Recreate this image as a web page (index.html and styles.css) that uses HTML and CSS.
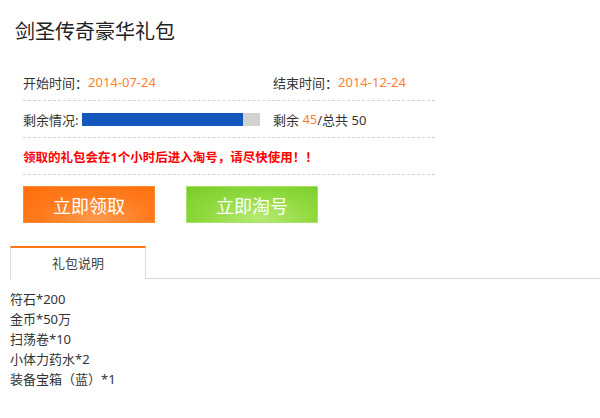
FILE: index.html
```html
<!DOCTYPE html>
<html>
<head>
    <meta charset="utf-8">
    <link rel="stylesheet" href="styles.css">
</head>
<body>
    <h1 class="title">剑圣传奇豪华礼包</h1>

    <div class="info">
        <div class="info-row">
            <div class="col">开始时间：<span class="hl">2014-07-24</span></div>
            <div class="col">结束时间：<span class="hl">2014-12-24</span></div>
        </div>
        <div class="info-row">
            <div class="col">剩余情况:<span class="bar"><span class="bar-fill" style="width: 90%;"></span></span></div>
            <div class="col">剩余&nbsp;<span class="hl">45</span>/总共&nbsp;50</div>
        </div>
        <div class="info-row notice">领取的礼包会在1个小时后进入淘号，请尽快使用！！</div>
    </div>

    <div class="actions">
        <button class="btn btn-get">立即领取</button>
        <button class="btn btn-tao">立即淘号</button>
    </div>

    <div class="tabs">
        <div class="tab active">礼包说明</div>
        <div class="tab-rest"></div>
    </div>

    <ul class="gift-list">
        <li>符石*200</li>
        <li>金币*50万</li>
        <li>扫荡卷*10</li>
        <li>小体力药水*2</li>
        <li>装备宝箱（蓝）*1</li>
    </ul>
</body>
</html>
```

FILE: styles.css
```css
body {
    margin: 0;
    background: #fff;
    color: #333;
    font-family: "Noto Sans", "Noto Sans CJK SC", sans-serif;
    font-size: 13px;
}

.title {
    margin: 0 0 18px 15px;
    padding-top: 18px;
    font-size: 20px;
    line-height: 28px;
    font-weight: normal;
    color: #222;
}

.info {
    width: 412px;
    margin-left: 23px;
}

.info-row {
    display: flex;
    align-items: center;
    height: 36px;
    border-bottom: 1px dashed #d4d4d4;
}

.col {
    display: flex;
    align-items: center;
}

.col:first-child {
    width: 250px;
}

.hl {
    color: #ff7f2a;
}

.bar {
    display: inline-block;
    width: 178px;
    height: 13px;
    margin-left: 4px;
    background: #d2d2d2;
}

.bar-fill {
    display: block;
    height: 100%;
    background: #1558bb;
}

.notice {
    color: #f00;
    font-size: 12.5px;
    font-weight: bold;
}

.actions {
    display: flex;
    gap: 31px;
    margin: 11px 0 0 23px;
}

.btn {
    width: 132px;
    height: 37px;
    border: none;
    padding: 0;
    color: #fff;
    font-family: inherit;
    font-size: 18px;
    cursor: pointer;
}

.btn-get {
    background: radial-gradient(ellipse at 55% 90%, #ff9a4e 0%, #ff7a1c 55%, #ff6d0a 100%);
    border: 1px solid #ff8a2e;
}

.btn-tao {
    background: radial-gradient(ellipse at 55% 90%, #b6ea74 0%, #8fd93c 55%, #78cc2a 100%);
    border: 1px solid #a6e36a;
}

.tabs {
    display: flex;
    margin: 23px 0 0 10px;
}

.tab {
    width: 134px;
    height: 31px;
    line-height: 31px;
    text-align: center;
    border-top: 2px solid #ff7a14;
    border-left: 1px solid #ddd;
    border-right: 1px solid #ddd;
    color: #444;
}

.tab-rest {
    flex: 1;
    border-bottom: 1px solid #d8d8d8;
}

.gift-list {
    list-style: none;
    margin: 0;
    padding: 10px 0 0 10px;
}

.gift-list li {
    line-height: 20px;
}
```
